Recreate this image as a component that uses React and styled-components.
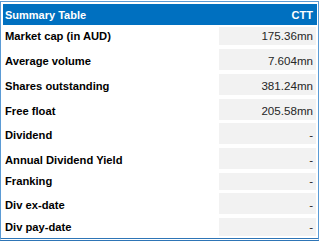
import React from "react";
import styled, { createGlobalStyle } from "styled-components";

const rows = [
  { label: "Market cap (in AUD)", value: "175.36mn", gap: 2, height: 18 },
  { label: "Average volume", value: "7.604mn", gap: 4, height: 21 },
  { label: "Shares outstanding", value: "381.24mn", gap: 4, height: 21 },
  { label: "Free float", value: "205.58mn", gap: 4, height: 21 },
  { label: "Dividend", value: "-", gap: 3, height: 21 },
  { label: "Annual Dividend Yield", value: "-", gap: 4, height: 21 },
  { label: "Franking", value: "-", gap: 4, height: 17 },
  { label: "Div ex-date", value: "-", gap: 3, height: 21 },
  { label: "Div pay-date", value: "-", gap: 4, height: 18 },
];

const App = () => {
  return (
    <>
      <GlobalStyle />
      <StFrame>
        <StHeader>
          <span>Summary Table</span>
          <span>CTT</span>
        </StHeader>
        {rows.map((r) => (
          <StRow key={r.label} $gap={r.gap} $height={r.height}>
            <StLabel>{r.label}</StLabel>
            <StValue>{r.value}</StValue>
          </StRow>
        ))}
      </StFrame>
    </>
  );
};

export default App;

const GlobalStyle = createGlobalStyle`
  body {
    margin: 0;
    background: #fff;
    font-family: "Liberation Sans", Arial, sans-serif;
  }
`;

const StFrame = styled.div`
  box-sizing: border-box;
  width: 319px;
  margin-top: 1px;
  padding: 2px 1px 2px 2px;
  border: 1px solid #5b9bd5;
  border-bottom: 3px double #2e75b6;
`;

const StHeader = styled.div`
  display: flex;
  justify-content: space-between;
  align-items: center;
  height: 21px;
  padding: 0 4px 0 2px;
  background: #0070c0;
  color: #fff;
  font-size: 11px;
  font-weight: bold;
`;

const StRow = styled.div`
  display: grid;
  grid-template-columns: 216px 97px;
  margin-top: ${(p) => p.$gap}px;
  height: ${(p) => p.$height}px;
`;

const StLabel = styled.div`
  display: flex;
  align-items: flex-end;
  padding: 0 0 2px 2px;
  font-size: 11.2px;
  font-weight: bold;
  line-height: 14px;
  color: #000;
`;

const StValue = styled.div`
  display: flex;
  align-items: flex-end;
  justify-content: flex-end;
  padding: 0 3px 2px 0;
  background: #f2f2f2;
  font-size: 11.6px;
  line-height: 14px;
  color: #262626;
`;
